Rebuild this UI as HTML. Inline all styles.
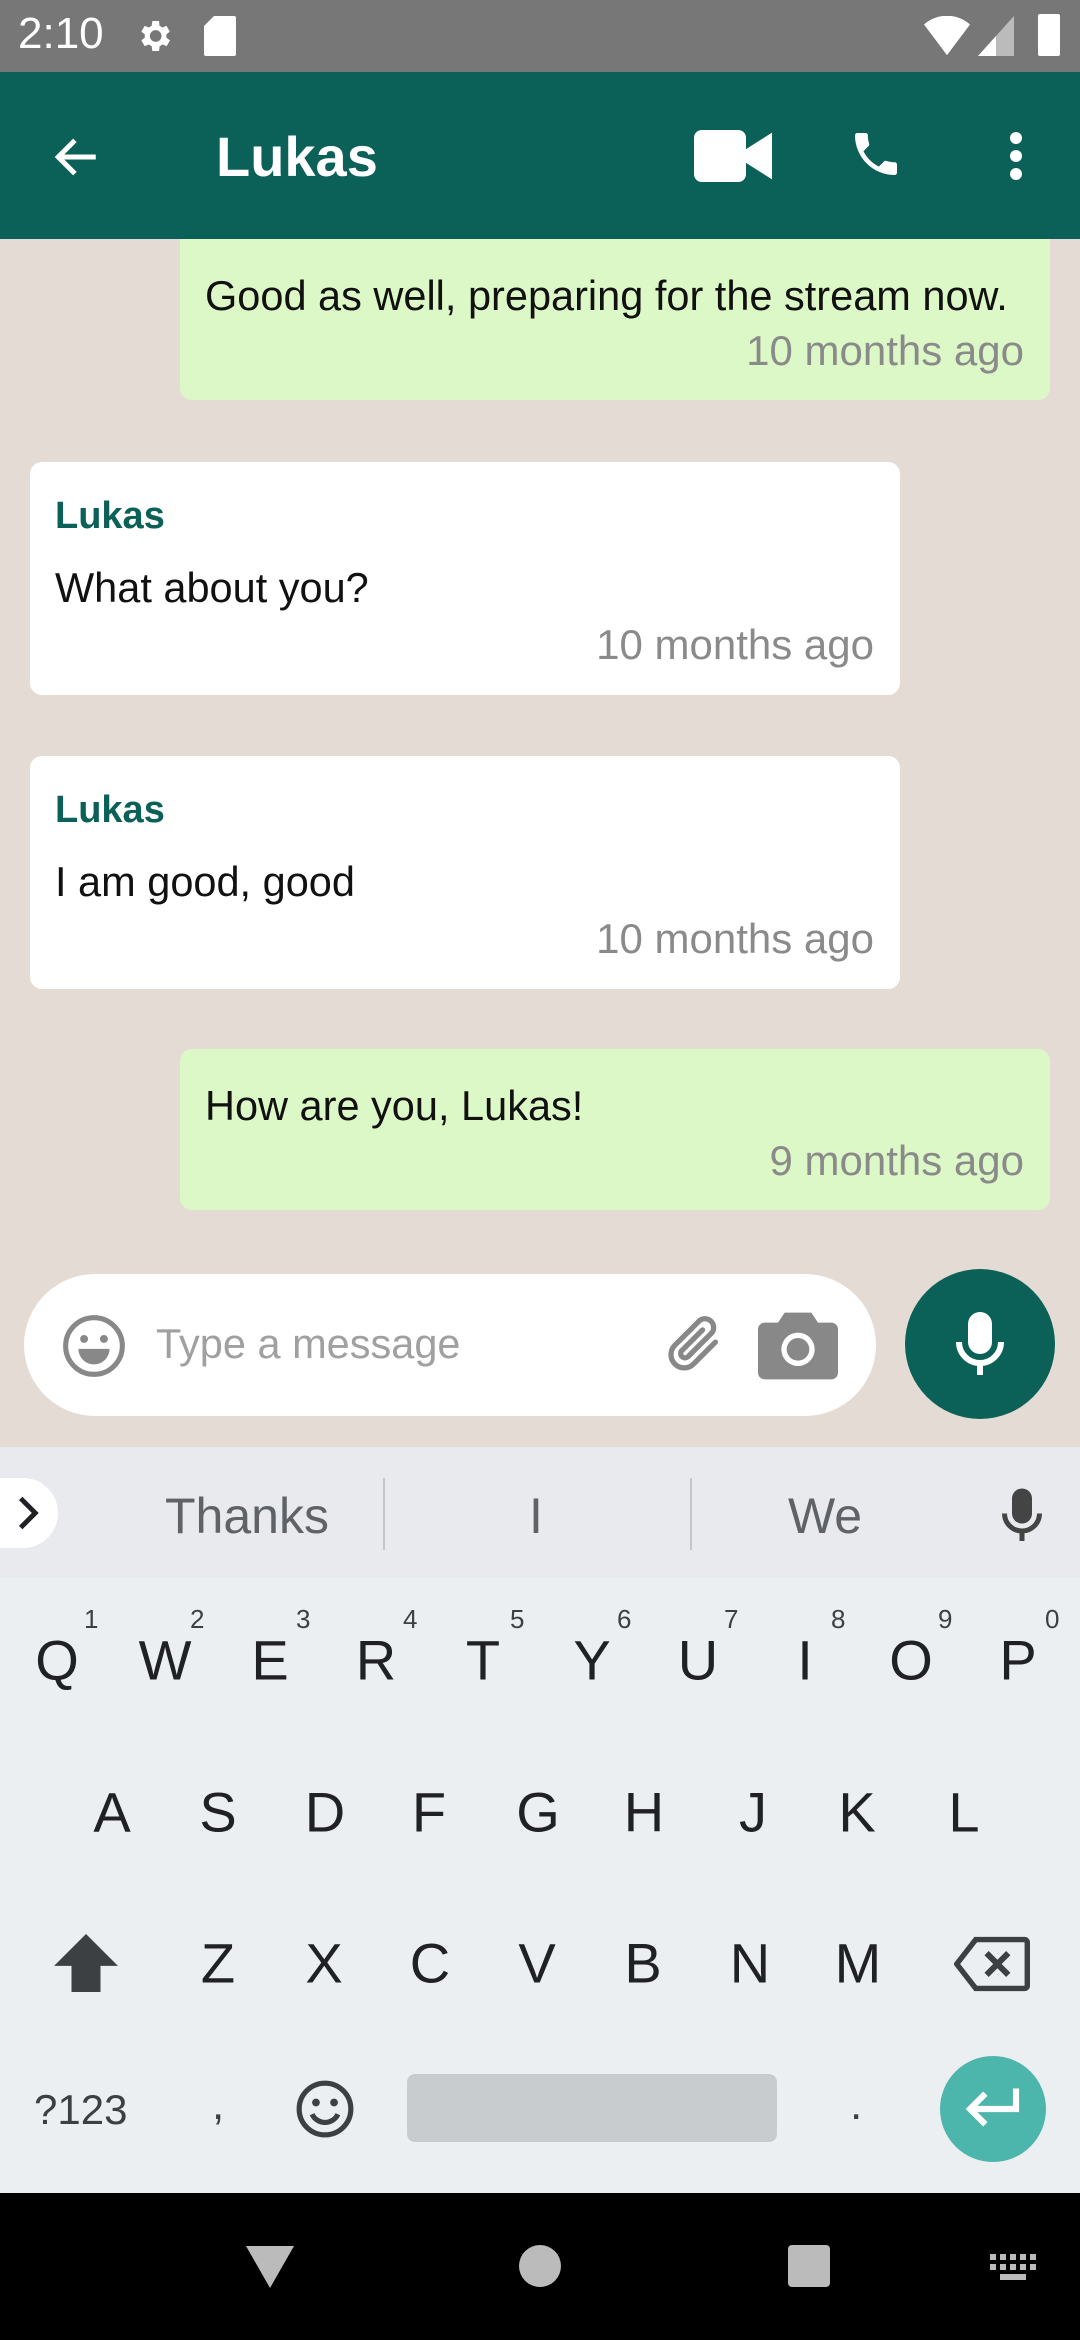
<!DOCTYPE html>
<html><head><meta charset="utf-8"><style>
*{margin:0;padding:0;box-sizing:border-box}
body{width:1080px;height:2340px;position:relative;overflow:hidden;font-family:"Liberation Sans",sans-serif;background:#e4dcd4}
.a{position:absolute}
.bub{position:absolute;border-radius:12px}
.msg{position:absolute;font-size:41.5px;color:#111;white-space:nowrap}
.tm{position:absolute;font-size:42px;color:#8a8a8a;white-space:nowrap;right:26px}
.nm{position:absolute;font-size:38px;color:#0b6157;font-weight:bold}
.k{position:absolute;font-size:56px;color:#202124;width:100px;text-align:center;transform:translate(-50%,-50%)}
.n{position:absolute;font-size:26px;color:#3c4043}
.sg{position:absolute;font-size:50px;color:#5f6368;transform:translate(-50%,-50%)}
</style></head><body>
<div class="a" style="left:0;top:0;width:1080px;height:72px;background:#777"></div>
<div class="a" style="left:18px;top:9px;font-size:44px;color:#fff">2:10</div>
<svg class="a" style="left:134px;top:16px" width="40" height="40" viewBox="0 0 24 24"><path fill="#fff" d="M19.4 13a7 7 0 0 0 0-2l2.1-1.6-2-3.5-2.5 1a7 7 0 0 0-1.7-1L15 3h-4l-.4 2.9a7 7 0 0 0-1.7 1l-2.5-1-2 3.5L6.5 11a7 7 0 0 0 0 2l-2.1 1.6 2 3.5 2.5-1a7 7 0 0 0 1.7 1L11 21h4l.4-2.9a7 7 0 0 0 1.7-1l2.5 1 2-3.5zM13 15.5a3.5 3.5 0 1 1 0-7 3.5 3.5 0 0 1 0 7z"/></svg>
<svg class="a" style="left:204px;top:16px" width="32" height="40" viewBox="0 0 16 20"><path fill="#fff" d="M5 0h10a1 1 0 0 1 1 1v18a1 1 0 0 1-1 1H1a1 1 0 0 1-1-1V5z"/></svg>
<svg class="a" style="left:924px;top:16px" width="46" height="40" viewBox="0 0 24 20"><path fill="#fff" d="M12 20L0 4a18 18 0 0 1 24 0z"/></svg>
<svg class="a" style="left:978px;top:16px" width="36" height="40" viewBox="0 0 18 20"><path fill="#bbb" d="M18 0v20H0z"/><path fill="#fff" d="M9 10v10H0z"/></svg>
<div class="a" style="left:1038px;top:14px;width:22px;height:42px;background:#fff;border-radius:2px"></div>
<div class="a" style="left:0;top:72px;width:1080px;height:167px;background:#0b6157"></div>
<svg class="a" style="left:50px;top:132px" width="54" height="50" viewBox="0 0 24 24"><path fill="none" stroke="#fff" stroke-width="2.4" d="M21 12H4M11 4l-8 8 8 8"/></svg>
<div class="a" style="left:216px;top:124px;font-size:56px;font-weight:bold;color:#fff">Lukas</div>
<svg class="a" style="left:694px;top:130px" width="78" height="52" viewBox="0 0 30 20"><rect x="0" y="0" width="20" height="20" rx="3" fill="#fff"/><path fill="#fff" d="M19 8l11-7v18l-11-7z"/></svg>
<svg class="a" style="left:848px;top:126px" width="56" height="56" viewBox="0 0 24 24"><path fill="#fff" d="M6.6 10.8a15 15 0 0 0 6.6 6.6l2.2-2.2a1 1 0 0 1 1-.25 11.4 11.4 0 0 0 3.6.57 1 1 0 0 1 1 1V20a1 1 0 0 1-1 1A17 17 0 0 1 3 4a1 1 0 0 1 1-1h3.5a1 1 0 0 1 1 1c0 1.25.2 2.45.57 3.57a1 1 0 0 1-.25 1z"/></svg>
<div class="a" style="left:1010px;top:132px;width:12px;height:12px;border-radius:6px;background:#fff;box-shadow:0 18px 0 #fff,0 36px 0 #fff"></div>

<div class="bub" style="left:180px;top:239px;width:870px;height:161px;background:#dcf8c6;border-radius:0 0 12px 12px"></div>
<div class="msg" style="left:205px;top:272px">Good as well, preparing for the stream now.</div>
<div class="tm" style="right:56px;top:327px">10 months ago</div>

<div class="bub" style="left:30px;top:462px;width:870px;height:233px;background:#fff"></div>
<div class="nm" style="left:55px;top:495px">Lukas</div>
<div class="msg" style="left:55px;top:564px">What about you?</div>
<div class="tm" style="right:206px;top:621px">10 months ago</div>

<div class="bub" style="left:30px;top:756px;width:870px;height:233px;background:#fff"></div>
<div class="nm" style="left:55px;top:789px">Lukas</div>
<div class="msg" style="left:55px;top:858px">I am good, good</div>
<div class="tm" style="right:206px;top:915px">10 months ago</div>

<div class="bub" style="left:180px;top:1049px;width:870px;height:161px;background:#dcf8c6"></div>
<div class="msg" style="left:205px;top:1082px">How are you, Lukas!</div>
<div class="tm" style="right:56px;top:1137px">9 months ago</div>

<div class="a" style="left:24px;top:1274px;width:852px;height:142px;background:#fff;border-radius:71px"></div>
<svg class="a" style="left:60px;top:1312px" width="68" height="68" viewBox="0 0 24 24"><circle cx="12" cy="12" r="10" fill="none" stroke="#888" stroke-width="1.8"/><circle cx="8.5" cy="9.5" r="1.4" fill="#888"/><circle cx="15.5" cy="9.5" r="1.4" fill="#888"/><path d="M6.5 13h11a5.5 5.5 0 0 1-11 0z" fill="#888"/></svg>
<div class="a" style="left:156px;top:1320px;font-size:41.5px;color:#a0a0a0">Type a message</div>
<svg class="a" style="left:660px;top:1310px" width="70" height="70" viewBox="0 0 24 24"><path fill="none" stroke="#888" stroke-width="1.8" stroke-linecap="round" d="M19 11l-7.5 7.5a4.5 4.5 0 0 1-6.4-6.4l8.5-8.5a3 3 0 0 1 4.2 4.2l-8.3 8.3a1.5 1.5 0 0 1-2.1-2.1l7.2-7.2"/></svg>
<svg class="a" style="left:758px;top:1312px" width="80" height="68" viewBox="0 0 24 20"><path fill="#888" d="M8 0h8l2 3h4a2 2 0 0 1 2 2v13a2 2 0 0 1-2 2H2a2 2 0 0 1-2-2V5a2 2 0 0 1 2-2h4z"/><circle cx="12" cy="11" r="5" fill="#fff"/><circle cx="12" cy="11" r="3.4" fill="#888"/></svg>
<div class="a" style="left:905px;top:1269px;width:150px;height:150px;border-radius:75px;background:#0b6157"></div>
<svg class="a" style="left:954px;top:1312px" width="52" height="66" viewBox="0 0 16 22"><rect x="4" y="0" width="8" height="14" rx="4" fill="#fff"/><path d="M1 10a7 7 0 0 0 14 0" fill="none" stroke="#fff" stroke-width="2"/><rect x="7" y="16" width="2" height="5" fill="#fff"/></svg>

<div class="a" style="left:0;top:1447px;width:1080px;height:131px;background:#e8eaed"></div>
<div class="a" style="left:0;top:1478px;width:58px;height:70px;background:#fff;border-radius:0 35px 35px 0"></div>
<svg class="a" style="left:14px;top:1496px" width="28" height="34" viewBox="0 0 10 14"><path d="M2 1l6 6-6 6" fill="none" stroke="#202124" stroke-width="2"/></svg>
<div class="sg" style="left:247px;top:1516px">Thanks</div>
<div class="a" style="left:383px;top:1478px;width:2px;height:72px;background:#c4c7c5"></div>
<div class="sg" style="left:536px;top:1516px">I</div>
<div class="a" style="left:690px;top:1478px;width:2px;height:72px;background:#c4c7c5"></div>
<div class="sg" style="left:825px;top:1516px">We</div>
<svg class="a" style="left:1002px;top:1488px" width="40" height="56" viewBox="0 0 16 22"><rect x="4" y="0" width="8" height="14" rx="4" fill="#444"/><path d="M1 10a7 7 0 0 0 14 0" fill="none" stroke="#444" stroke-width="2"/><rect x="7" y="16" width="2" height="5" fill="#444"/></svg>

<div class="a" style="left:0;top:1578px;width:1080px;height:615px;background:#eceff1"></div>
<div class="k" style="left:57px;top:1660px">Q</div><div class="n" style="left:84px;top:1604px">1</div>
<div class="k" style="left:165px;top:1660px">W</div><div class="n" style="left:190px;top:1604px">2</div>
<div class="k" style="left:270px;top:1660px">E</div><div class="n" style="left:296px;top:1604px">3</div>
<div class="k" style="left:376px;top:1660px">R</div><div class="n" style="left:403px;top:1604px">4</div>
<div class="k" style="left:483px;top:1660px">T</div><div class="n" style="left:510px;top:1604px">5</div>
<div class="k" style="left:592px;top:1660px">Y</div><div class="n" style="left:617px;top:1604px">6</div>
<div class="k" style="left:698px;top:1660px">U</div><div class="n" style="left:724px;top:1604px">7</div>
<div class="k" style="left:805px;top:1660px">I</div><div class="n" style="left:831px;top:1604px">8</div>
<div class="k" style="left:911px;top:1660px">O</div><div class="n" style="left:938px;top:1604px">9</div>
<div class="k" style="left:1018px;top:1660px">P</div><div class="n" style="left:1045px;top:1604px">0</div>
<div class="k" style="left:112px;top:1812px">A</div>
<div class="k" style="left:218px;top:1812px">S</div>
<div class="k" style="left:325px;top:1812px">D</div>
<div class="k" style="left:429px;top:1812px">F</div>
<div class="k" style="left:538px;top:1812px">G</div>
<div class="k" style="left:644px;top:1812px">H</div>
<div class="k" style="left:753px;top:1812px">J</div>
<div class="k" style="left:857px;top:1812px">K</div>
<div class="k" style="left:964px;top:1812px">L</div>
<svg class="a" style="left:54px;top:1934px" width="64" height="58" viewBox="0 0 22 20"><path fill="#3c4043" d="M11 0l11 11h-6v9H6v-9H0z"/></svg>
<div class="k" style="left:218px;top:1963px">Z</div>
<div class="k" style="left:324px;top:1963px">X</div>
<div class="k" style="left:430px;top:1963px">C</div>
<div class="k" style="left:537px;top:1963px">V</div>
<div class="k" style="left:643px;top:1963px">B</div>
<div class="k" style="left:750px;top:1963px">N</div>
<div class="k" style="left:858px;top:1963px">M</div>
<svg class="a" style="left:954px;top:1936px" width="76" height="56" viewBox="0 0 28 20"><path d="M8 1h18a1 1 0 0 1 1 1v16a1 1 0 0 1-1 1H8L1 10z" fill="none" stroke="#3c4043" stroke-width="2"/><path d="M12 6l8 8M20 6l-8 8" stroke="#3c4043" stroke-width="2.2"/></svg>
<div class="a" style="left:34px;top:2086px;font-size:42px;color:#3c4043">?123</div>
<div class="a" style="left:212px;top:2080px;font-size:44px;color:#3c4043">,</div>
<svg class="a" style="left:294px;top:2078px" width="62" height="62" viewBox="0 0 24 24"><circle cx="12" cy="12" r="10" fill="none" stroke="#3c4043" stroke-width="2"/><circle cx="8.5" cy="9.5" r="1.5" fill="#3c4043"/><circle cx="15.5" cy="9.5" r="1.5" fill="#3c4043"/><path d="M7 14a5.5 5.5 0 0 0 10 0" fill="none" stroke="#3c4043" stroke-width="2"/></svg>
<div class="a" style="left:407px;top:2074px;width:370px;height:68px;background:#c9cccf;border-radius:8px"></div>
<div class="a" style="left:850px;top:2080px;font-size:44px;color:#3c4043">.</div>
<div class="a" style="left:940px;top:2056px;width:106px;height:106px;border-radius:53px;background:#4db6ac"></div>
<svg class="a" style="left:962px;top:2086px" width="62" height="46" viewBox="0 0 24 18"><path d="M21 1v8H4M9 3L3 9l6 6" fill="none" stroke="#fff" stroke-width="2.4"/></svg>

<div class="a" style="left:0;top:2193px;width:1080px;height:147px;background:#000"></div>
<svg class="a" style="left:246px;top:2246px" width="48" height="42" viewBox="0 0 24 21"><path d="M0 0h24L12 21z" fill="#bbb"/></svg>
<div class="a" style="left:519px;top:2245px;width:42px;height:42px;border-radius:21px;background:#bbb"></div>
<div class="a" style="left:788px;top:2245px;width:42px;height:42px;border-radius:4px;background:#bbb"></div>
<svg class="a" style="left:990px;top:2254px" width="46" height="26" viewBox="0 0 23 13"><g fill="#bbb"><rect x="0" y="0" width="3" height="3"/><rect x="5" y="0" width="3" height="3"/><rect x="10" y="0" width="3" height="3"/><rect x="15" y="0" width="3" height="3"/><rect x="20" y="0" width="3" height="3"/><rect x="0" y="5" width="3" height="3"/><rect x="5" y="5" width="3" height="3"/><rect x="10" y="5" width="3" height="3"/><rect x="15" y="5" width="3" height="3"/><rect x="20" y="5" width="3" height="3"/><rect x="5" y="10" width="13" height="3"/></g></svg>
</body></html>
